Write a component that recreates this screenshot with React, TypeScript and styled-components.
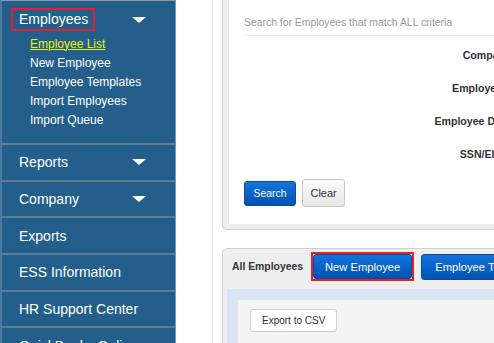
import React from "react";
import styled, { createGlobalStyle } from "styled-components";

const GlobalStyle = createGlobalStyle`
  html, body {
    margin: 0;
    padding: 0;
    overflow: hidden;
    background: #fff;
    font-family: "Liberation Sans", Arial, sans-serif;
  }
`;

const Page = styled.div`
  display: flex;
  width: 900px;
  height: 343px;
`;

const SideNav = styled.nav`
  flex: 0 0 176px;
  box-sizing: border-box;
  background: #245e8a;
  border-top: 1px solid #8d9aa6;
  border-left: 2px solid #4d7ba0;
  border-right: 1px solid #6a9cc6;
  color: #fff;
  overflow: hidden;
`;

const NavGroup = styled.div`
  padding: 7px 29px 13.5px 9px;
  border-bottom: 2px solid #5f7d96;
`;

const GroupHead = styled.div`
  display: flex;
  align-items: center;
  justify-content: space-between;
`;

const Highlight = styled.span`
  display: inline-block;
  border: 2px solid #e3212b;
  padding: 0 5px 0 6px;
  line-height: 19px;
  font-size: 14px;
`;

const Caret = styled.span`
  display: inline-block;
  width: 0;
  height: 0;
  border-left: 7px solid transparent;
  border-right: 7px solid transparent;
  border-top: 6.5px solid #fff;
`;

const SubList = styled.ul`
  list-style: none;
  margin: 3.5px 0 0;
  padding: 0 0 0 19px;
`;

const SubItem = styled.li<{ active?: boolean }>`
  font-size: 12px;
  line-height: 19px;
  white-space: nowrap;
  color: ${p => (p.active ? "#e8f20c" : "#fff")};
  text-decoration: ${p => (p.active ? "underline" : "none")};
`;

const NavItem = styled.div`
  display: flex;
  align-items: center;
  justify-content: space-between;
  height: 34.67px;
  padding: 0 29px 0 17px;
  border-bottom: 2px solid #5f7d96;
  font-size: 14px;
  white-space: nowrap;
`;

const Main = styled.main`
  flex: 1;
  background: #fff;
`;

const Content = styled.div`
  margin-left: 36px;
  padding-left: 9px;
  border-left: 1px solid #e6e6e6;
  height: 100%;
`;

const Panel = styled.section`
  box-sizing: border-box;
  width: 560px;
  background: #efefef;
  border: 1px solid #cfcfcf;
  border-top: none;
  border-radius: 0 0 5px 5px;
  padding: 0 5px 5px;
`;

const Card = styled.div`
  background: #fff;
  padding: 16px 0 17px 15px;
  border-left: 1px solid #e4e4e4;
`;

const Legend = styled.div`
  font-size: 10.4px;
  line-height: 14px;
  color: #9a9a9a;
  padding-bottom: 5px;
  border-bottom: 1px solid #ececec;
`;

const FormGrid = styled.div`
  display: grid;
  grid-template-columns: 267px 200px;
  grid-auto-rows: 33px;
  align-items: center;
  margin-top: 2px;
`;

const Label = styled.label`
  justify-self: end;
  font-size: 10.6px;
  font-weight: bold;
  color: #333;
  white-space: nowrap;
`;

const Field = styled.input`
  margin-left: 10px;
  height: 22px;
  border: 1px solid #ccc;
`;

const ButtonRow = styled.div`
  display: flex;
  align-items: center;
  gap: 6px;
  margin-top: 9px;
`;

const BlueButton = styled.button<{ h: number; fs: number; px: number }>`
  height: ${p => p.h}px;
  padding: 0 ${p => p.px}px;
  border: 1px solid #0a4c9c;
  border-radius: 3px;
  background: linear-gradient(#1474dc, #0051b3);
  color: #fff;
  font-family: inherit;
  font-size: ${p => p.fs}px;
  white-space: nowrap;
`;

const GreyButton = styled.button`
  height: 28px;
  padding: 0 7.5px;
  border: 1px solid #c8c8c8;
  border-radius: 3px;
  background: linear-gradient(#fbfbfb, #e6e6e6);
  color: #333;
  font-family: inherit;
  font-size: 11px;
`;

const ListPanel = styled.section`
  box-sizing: border-box;
  width: 560px;
  height: 200px;
  margin-top: 18px;
  background: #efefef;
  border: 1px solid #cfcfcf;
  border-radius: 5px;
  padding: 0 4px;
`;

const ListHead = styled.div`
  display: flex;
  align-items: flex-start;
  gap: 7px;
  box-sizing: border-box;
  height: 40px;
  padding: 3px 0 0 5px;
`;

const ListTitle = styled.span`
  font-size: 10.4px;
  font-weight: bold;
  color: #333;
  line-height: 29px;
  margin-right: 1px;
`;

const RedOutline = styled.span`
  display: inline-flex;
  border: 2px solid #e3212b;
`;

const TabBody = styled.div`
  background: #dbe5f4;
  padding: 10px 0 0 10px;
  height: 150px;
`;

const InnerBox = styled.div`
  background: #f4f4f4;
  border: 1px solid #e2e2e2;
  height: 100%;
  padding: 9px 0 0 12px;
`;

const WhiteButton = styled.button`
  height: 23px;
  padding: 0 11px;
  border: 1px solid #d0d0d0;
  border-radius: 3px;
  background: #fff;
  color: #333;
  font-family: inherit;
  font-size: 10px;
`;

const navItems = [
  { label: "Reports", caret: true },
  { label: "Company", caret: true },
  { label: "Exports" },
  { label: "ESS Information" },
  { label: "HR Support Center" },
  { label: "QuickBooks Online" },
];

const subItems = ["Employee List", "New Employee", "Employee Templates", "Import Employees", "Import Queue"];

const fields = ["Company", "Employee #", "Employee Dept", "SSN/EIN #"];

export default function App() {
  return (
    <>
      <GlobalStyle />
      <Page>
        <SideNav>
          <NavGroup>
            <GroupHead>
              <Highlight>Employees</Highlight>
              <Caret />
            </GroupHead>
            <SubList>
              {subItems.map((item, i) => (
                <SubItem key={item} active={i === 0}>{item}</SubItem>
              ))}
            </SubList>
          </NavGroup>
          {navItems.map(item => (
            <NavItem key={item.label}>
              <span>{item.label}</span>
              {item.caret && <Caret />}
            </NavItem>
          ))}
        </SideNav>
        <Main>
          <Content>
            <Panel>
              <Card>
                <Legend>Search for Employees that match ALL criteria</Legend>
                <FormGrid>
                  {fields.map(f => (
                    <React.Fragment key={f}>
                      <Label>{f}</Label>
                      <Field />
                    </React.Fragment>
                  ))}
                </FormGrid>
                <ButtonRow>
                  <BlueButton h={25} fs={10.4} px={8.5}>Search</BlueButton>
                  <GreyButton>Clear</GreyButton>
                </ButtonRow>
              </Card>
            </Panel>
            <ListPanel>
              <ListHead>
                <ListTitle>All Employees</ListTitle>
                <RedOutline>
                  <BlueButton h={25} fs={11.2} px={11}>New Employee</BlueButton>
                </RedOutline>
                <BlueButton h={26} fs={11.2} px={13} style={{ marginTop: 2 }}>Employee Templates</BlueButton>
              </ListHead>
              <TabBody>
                <InnerBox>
                  <WhiteButton>Export to CSV</WhiteButton>
                </InnerBox>
              </TabBody>
            </ListPanel>
          </Content>
        </Main>
      </Page>
    </>
  );
}
